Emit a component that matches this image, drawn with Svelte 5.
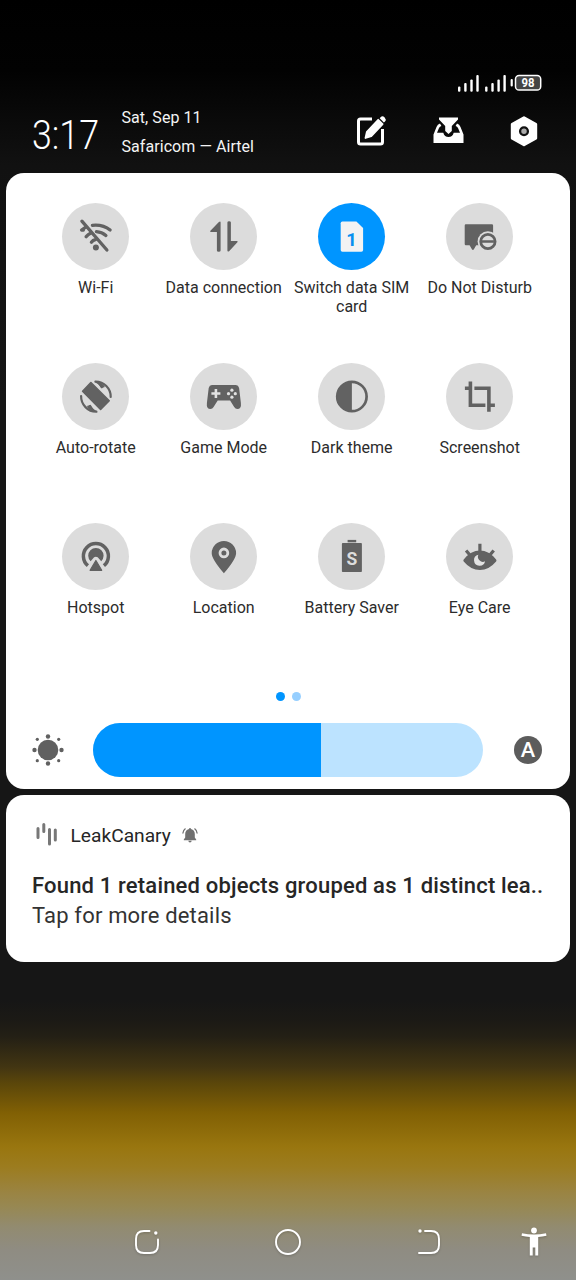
<script>
  const tiles = [
    { id: 'wifi', label: 'Wi-Fi' },
    { id: 'data', label: 'Data connection' },
    { id: 'sim', label: 'Switch data SIM card', on: true },
    { id: 'dnd', label: 'Do Not Disturb' },
    { id: 'rotate', label: 'Auto-rotate' },
    { id: 'game', label: 'Game Mode' },
    { id: 'dark', label: 'Dark theme' },
    { id: 'crop', label: 'Screenshot' },
    { id: 'hotspot', label: 'Hotspot' },
    { id: 'location', label: 'Location' },
    { id: 'battery', label: 'Battery Saver' },
    { id: 'eye', label: 'Eye Care' }
  ];
  const signals = [0, 27.1];
  const brightness = 58.5;
  const rays = [0, 90, 180, 270];
</script>

<div class="screen">
  <div class="status">
    <svg width="86" height="20" viewBox="0 0 86 20">
      {#each signals as x}
        <g fill="#fff" transform="translate({x} 0)">
          <rect x="1" y="13.6" width="2.4" height="5.2" rx="1" />
          <rect x="7.2" y="10" width="2.4" height="8.8" rx="1" />
          <rect x="13.3" y="6.4" width="2.4" height="12.4" rx="1" />
          <rect x="19.3" y="2" width="2.4" height="16.8" rx="1" />
        </g>
      {/each}
      <rect x="53.6" y="6" width="2.2" height="7.5" rx="1" fill="#fff" />
      <rect x="58.5" y="2.5" width="25.2" height="14.6" rx="3.6" fill="#444" stroke="#fff" stroke-width="1.5" />
      <text x="71" y="14.2" text-anchor="middle" textLength="13" lengthAdjust="spacingAndGlyphs" class="charge">98</text>
    </svg>
  </div>

  <header>
    <svg class="clock" width="76" height="60" viewBox="0 0 76 60">
      <text x="0" y="42.500" textLength="67" lengthAdjust="spacingAndGlyphs">3:17</text>
    </svg>
    <div class="when">
      <span>Sat, Sep 11</span>
      <span>Safaricom — Airtel</span>
    </div>
    <div class="actions">
      <svg width="34" height="34" viewBox="0 0 34 34">
        <path d="M18 5H6.500Q4.500 5 4.500 7V28Q4.500 30 6.500 30H26.500Q28.500 30 28.500 28V15" fill="none" stroke="#fff" stroke-width="3" />
        <path d="M24.200 5.800L28.600 10.200L17.300 22.200L11.500 24L12.900 17.800Z" fill="#fff" stroke="#fff" stroke-width="1.800" stroke-linejoin="round" />
        <path d="M26.800 2.900Q28.600 1.500 30.700 3.500Q32.600 5.600 31 7.400L29.900 8.400L25.700 4.200Z" fill="#fff" />
      </svg>
      <svg width="34" height="34" viewBox="0 0 34 34">
        <path d="M8 3.500H27V5.500L20.800 12V17L17.500 20L14.200 17V12L8 5.500Z" fill="#fff" />
        <path d="M9 9.500Q6.500 10 5.500 13L2.500 20.500V29H32.500V20.500L29.500 13Q28.500 10 26 9.500L24.600 12Q26.300 12.300 27 14L29 18.700H22.700Q21.500 23 17.500 23T12.300 18.700H6L8 14Q8.700 12.300 10.400 12Z" fill="#fff" />
      </svg>
      <svg width="34" height="34" viewBox="0 0 34 34">
        <path d="M17 3.800L28.700 10.200V24.300L17 30.800L5.300 24.300V10.200Z" fill="#fff" stroke="#fff" stroke-width="3" stroke-linejoin="round" />
        <circle cx="17" cy="17.200" r="3.900" fill="#aaa" stroke="#111" stroke-width="2.300" />
      </svg>
    </div>
  </header>

  <section class="panel">
    <div class="tiles">
      {#each tiles as t}
        <div class="tile">
          <div class="disc" class:on={t.on}>
            <svg width="41" height="41" viewBox="-20.5 -20.5 41 41" fill="#626262">
              {#if t.id === 'wifi'}
                <g fill="none" stroke="#626262" stroke-width="3.300" stroke-linecap="round">
                  <path d="M-14 -15.300L11 13.500" />
                  <path d="M-3.500 -11.200Q7 -12.300 14.200 -6.500M.5 -4.800Q6 -4.500 10 -1" />
                  <path d="M-14.300 -6.400L-10 -9.500M-14 -6.500L-12.500 -6.500M-9.800 .2Q-8.200 -2 -5 -3.500M-4.500 5.700Q-3 3.700 -.5 3.200" />
                </g>
                <circle cx="0" cy="11" r="3" />
              {:else if t.id === 'data'}
                <path d="M-3.300 -14V14Q-3.300 15.300 -5.200 15.300T-7 14V-4.500H-13Q-14.500 -4.700 -13.500 -5.700L-5 -14.500Q-3.300 -15.700 -3.300 -14Z" />
                <path d="M3.500 14V-14Q3.500 -15.300 5.200 -15.300T7 -14V4.500H13Q14.500 4.700 13.500 5.700L5.200 14.700Q3.500 15.700 3.500 14Z" />
              {:else if t.id === 'sim'}
                <path d="M-9.500 -15H4.500L11.200 -8.500V13.500Q11.200 15.200 9.500 15.200H-9.500Q-11.200 15.200 -11.200 13.500V-13.300Q-11.200 -15 -9.500 -15Z" fill="#f3f3f3" />
                <text x="-.3" y="9.200" text-anchor="middle" class="one">1</text>
              {:else if t.id === 'dnd'}
                <path d="M-14 -12.200H12Q13.200 -12.200 13.200 -11V8.800H-3.700L-6 12.800Q-7 14 -8 12.800L-10.300 8.800H-14Q-15.200 8.800 -15.200 7.600V-11Q-15.200 -12.200 -14 -12.200Z" />
                <circle cx="8" cy="5" r="10.300" fill="#dcdcdc" />
                <circle cx="8" cy="5" r="7.200" fill="none" stroke="#626262" stroke-width="2.800" />
                <path d="M2 3.800H14V6.300H2Z" />
              {:else if t.id === 'rotate'}
                <path d="M-5 -14L13.300 4.300L4.700 13L-13.300 -5.200Z" stroke="#626262" stroke-width="1.600" stroke-linejoin="round" />
                <g fill="none" stroke="#626262" stroke-width="2.200" stroke-linecap="round" stroke-linejoin="round">
                  <path d="M-.5 -14.800C8 -15 15 -8 14.800 .5M-.5 -14.800Q3.200 -14 5.800 -9.300" />
                  <path d="M.5 15.200C-8 15.400 -15 8 -14.800 -.5M.5 15.200Q-3.500 14.500 -5.800 9.500" />
                </g>
                <path d="M0 -15Q7 -14 9 -9.500L5.800 -8.500ZM0 15.400Q-7 14 -9 9.500L-5.800 8.500Z" />
              {:else if t.id === 'game'}
                <path d="M-12 -11.500H12Q14.500 -11.300 15.200 -8.500L17 6.500Q17.700 12.500 13.400 12.500Q11.500 12.500 10.300 10.600L6.200 4H-6.200L-10.300 10.600Q-11.500 12.500 -13.400 12.500Q-17.700 12.500 -17 6.500L-15.200 -8.500Q-14.500 -11.300 -12 -11.500Z" />
                <path d="M-8 -7.500V1.500M-12.500 -3H-3.500" stroke="#e2e2e2" stroke-width="2.600" />
                <g fill="#e2e2e2"><circle cx="8" cy="-6.300" r="1.600" /><circle cx="8" cy=".7" r="1.600" /><circle cx="4.600" cy="-2.800" r="1.600" /><circle cx="11.400" cy="-2.800" r="1.600" /></g>
              {:else if t.id === 'dark'}
                <circle r="14.700" fill="none" stroke="#626262" stroke-width="2.700" />
                <path d="M0 -14.500A14.500 14.500 0 0 0 0 14.500Z" />
              {:else if t.id === 'crop'}
                <g fill="none" stroke="#626262" stroke-width="3.600">
                  <path d="M-9.500 -15V8.800H5.500M-15 -8.300H-9M-5.500 -8.300H9V15.300M9 8.800H15" />
                </g>
              {:else if t.id === 'hotspot'}
                <path d="M-8 9.200A12.500 12.500 0 1 1 8 9.200" fill="none" stroke="#626262" stroke-width="3.500" />
                <path d="M-5.300 4.700A7.700 7.700 0 1 1 5.300 4.700L1.800 .8Q0 -.3 -1.800 .8Z" />
                <path d="M0 4L5.800 13.800H-5.800Z" stroke="#626262" stroke-width="1.200" stroke-linejoin="round" />
              {:else if t.id === 'location'}
                <path d="M0 -15.500A12.200 12.200 0 0 1 12.200 -3.300Q12.200 2.500 0 16.800Q-12.200 2.500 -12.200 -3.300A12.200 12.200 0 0 1 0 -15.500Z" />
                <circle cx="0" cy="-3.600" r="3.900" stroke="#dcdcdc" stroke-width="2.800" />
              {:else if t.id === 'battery'}
                <rect x="-4.300" y="-16.600" width="8.600" height="2.400" />
                <rect x="-10" y="-13.400" width="20" height="29" rx=".8" />
                <text x="0" y="8.500" text-anchor="middle" textLength="10.800" lengthAdjust="spacingAndGlyphs" class="saver">S</text>
              {:else if t.id === 'eye'}
                <path d="M-16.200 3Q-9 -6 0 -6T16.200 3Q17 4 16.200 5Q9 13.600 0 13.600T-16.200 5Q-17 4 -16.200 3Z" />
                <path d="M0 -12.700V-4M-13.800 -6L-10 -1.500M13.800 -6L10 -1.500" stroke="#626262" stroke-width="3.200" />
                <path d="M-1.500 -1.800A5.600 5.600 0 1 0 5.200 4.800A5 5 0 0 1 -1.500 -1.800Z" fill="#e2e2e2" />
              {/if}
            </svg>
          </div>
          <span>{t.label}</span>
        </div>
      {/each}
    </div>
    <div class="dots"><i class="current"></i><i></i></div>
    <div class="brightness">
      <svg width="34" height="34" viewBox="-17 -17 34 34" fill="#606060">
        <circle r="10.300" />
        {#each rays as r}
          <g transform="rotate({r})"><circle cx="13.500" r="2.200" /><circle cx="10.700" cy="10.700" r="1.600" /></g>
        {/each}
      </svg>
      <div class="track"><div class="level" style="width: {brightness}%"></div></div>
      <div class="auto">A</div>
    </div>
  </section>

  <section class="notice">
    <div class="app">
      <svg width="24" height="26" viewBox="0 0 24 26" stroke="#777" stroke-width="3" stroke-linecap="round">
        <path d="M3 6.500V15.500M8.800 2.500V9.500M14.500 7.500V22M20.300 8V18" />
      </svg>
      <span>LeakCanary</span>
      <svg width="16" height="16" viewBox="0 0 16 16" fill="#707070">
        <path d="M8 1Q9 1 9 2Q12.800 3 12.800 7V10.500L14.200 12.500V13.300H1.800V12.500L3.200 10.500V7Q3.200 3 7 2Q7 1 8 1ZM6.300 13.800H9.700Q9.500 15.500 8 15.500T6.300 13.800Z" />
        <path d="M3.500 1.500Q1 3.200 .8 6.500M12.500 1.500Q15 3.200 15.200 6.500" fill="none" stroke="#707070" stroke-width="1.300" />
      </svg>
    </div>
    <div class="title">Found 1 retained objects grouped as 1 distinct lea..</div>
    <div class="detail">Tap for more details</div>
  </section>

  <nav>
    <svg width="30" height="30" viewBox="-15 -15 30 30">
      <path d="M2.500 -11H-3Q-11 -11 -11 -3V3Q-11 11 -3 11H3Q11 11 11 3V-2.500" />
      <circle cx="8.800" cy="-9" r="1.700" class="dot" />
    </svg>
    <svg width="30" height="30" viewBox="-15 -15 30 30"><circle r="12" /></svg>
    <svg width="30" height="30" viewBox="-15 -15 30 30">
      <path d="M-4 -11H2Q10 -11 10 -3V3Q10 11 2 11H-10" />
      <circle cx="-9" cy="-11" r="1.700" class="dot" />
    </svg>
    <svg class="person" width="30" height="30" viewBox="-15 -15 30 30">
      <circle cx="0" cy="-11.500" r="2.900" />
      <path d="M-12 -8.800Q0 -6.300 12 -8.800L12.500 -6.300Q8.500 -5.400 4.200 -5V13.500H1.300V5.500H-1.300V13.500H-4.200V-5Q-8.500 -5.400 -12.500 -6.300Z" />
    </svg>
  </nav>
</div>

<style>
  :global(body) { margin: 0; background: #000; }
  .screen {
    width: 576px;
    height: 1280px;
    box-sizing: border-box;
    padding: 73px 6px 0;
    display: flex;
    flex-direction: column;
    overflow: hidden;
    font-family: Roboto, sans-serif;
    background: linear-gradient(#000 0, #020202 70px, #111 165px, #161616 400px, #161616 1000px, #1c1a15 1022px, #242015 1037px, #423512 1067px, #5a460a 1083px, #816004 1113px, #99760f 1147px, #9c7c1f 1167px, #9a8443 1193px, #978853 1207px, #928b70 1227px, #8f8c82 1250px, #8f908c 1280px);
  }
  svg { display: block; flex: none; }
  .status { display: flex; justify-content: flex-end; height: 20px; padding-right: 27px; }
  .charge { font: 700 12.500px Roboto, sans-serif; fill: #fff; }
  header { display: flex; align-items: flex-start; height: 80px; padding: 0 27px 0 26px; box-sizing: border-box; }
  .clock { margin-top: 12.500px; overflow: visible; }
  .clock text { font: 300 41.500px Roboto, sans-serif; fill: #fff; }
  .when { display: flex; flex-direction: column; gap: 9px; margin: 15px 0 0 13.500px; color: #f4f4f4; font-size: 16px; line-height: 20px; letter-spacing: .06px; white-space: nowrap; }
  .actions { display: flex; gap: 42.500px; margin: 21px 2px 0 auto; }
  .panel { background: #fff; border-radius: 18px; height: 616px; flex: none; box-sizing: border-box; padding-top: 30px; margin-right: .5px; margin-left: .4px; }
  .tiles { display: grid; grid-template-columns: repeat(4, 128px); grid-auto-rows: 160px; margin-left: 25.300px; }
  .tile { display: flex; flex-direction: column; align-items: center; text-align: center; font-size: 16px; line-height: 19px; color: #2c2c2c; }
  .tile span { margin-top: 8px; }
  .disc { width: 67px; height: 67px; border-radius: 50%; background: #dcdcdc; display: grid; place-items: center; flex: none; }
  .disc.on { background: #0095ff; }
  .disc svg { transform: translateX(.4px); }
  .one { font: 700 18.500px Roboto, sans-serif; fill: #0790ef; }
  .saver { font: 700 19px Roboto, sans-serif; fill: #dcdcdc; }
  .dots { display: flex; justify-content: center; gap: 7px; margin-top: 8.500px; padding-left: 1px; }
  .dots i { width: 9px; height: 9px; border-radius: 50%; background: #96cfff; }
  .dots .current { background: #0095ff; }
  .brightness { display: flex; align-items: center; margin-top: 22.500px; padding: 0 27.500px 0 24.600px; }
  .track { width: 390px; height: 54px; border-radius: 27px; overflow: hidden; background: #bce3ff; margin-left: 28px; }
  .level { height: 100%; background: #0095ff; }
  .auto { width: 28px; height: 28px; border-radius: 50%; background: #5c5c5c; color: #fff; margin-left: auto; text-align: center; font: 700 20px/27px Lato, sans-serif; }
  .notice { margin: 6px .5px 0 .4px; height: 167px; flex: none; background: #fff; border-radius: 18px; box-sizing: border-box; padding: 27px 25px 0 25.600px; color: #262626; white-space: nowrap; }
  .app { display: flex; align-items: center; height: 26px; font-size: 19.200px; }
  .app svg:first-child { margin-left: 3px; }
  .app span { margin: 0 11px 0 11.500px; }
  .title { margin-top: 23px; font-size: 22px; line-height: 30px; font-weight: 500; letter-spacing: .18px; }
  .detail { font-size: 22px; line-height: 30px; letter-spacing: .17px; color: #333; }
  nav { margin-top: auto; display: flex; height: 53px; padding-left: 126px; filter: drop-shadow(0 1px 1px #0003); }
  nav svg { fill: none; stroke: #fff; stroke-width: 1.900; stroke-linecap: round; }
  nav svg + svg { margin-left: 111px; }
  nav svg.person { margin-left: 75px; }
  nav .dot, nav svg.person { fill: #fff; stroke: none; }
</style>
